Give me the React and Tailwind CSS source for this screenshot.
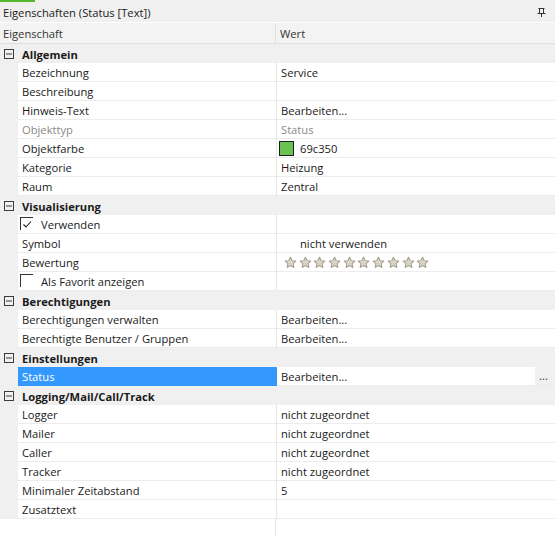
import React from "react";

const Minus = () => (
  <svg width="10" height="10" viewBox="0 0 10 10" className="block">
    <rect x="0.5" y="0.5" width="9" height="9" fill="none" stroke="#3c3c3c" strokeWidth="1" />
    <line x1="2" y1="5" x2="8" y2="5" stroke="#3c3c3c" strokeWidth="1" />
  </svg>
);

const Star = () => (
  <svg width="13" height="13" viewBox="0 0 24 24" className="block">
    <path
      d="M12 2.5l2.9 6.3 6.8.7-5.1 4.6 1.5 6.8L12 17.4l-6.1 3.5 1.5-6.8-5.1-4.6 6.8-.7z"
      fill="#f1eee6"
      stroke="#a39c8a"
      strokeWidth="2.2"
      strokeLinejoin="round"
    />
    <path d="M12 7l1.6 3.6 3.9.4-2.9 2.6.9 3.9L12 15.5l-3.5 2 .9-3.9-2.9-2.6 3.9-.4z" fill="#d8d2c2" />
  </svg>
);

const Check = ({ checked }) => (
  <div className="w-[13px] h-[13px] border-l border-t border-[#333] relative">
    {checked && (
      <svg width="13" height="13" viewBox="0 0 13 13" className="absolute left-0 top-0">
        <path d="M2.5 6.5 L5 9 L10 3.5" fill="none" stroke="#222" strokeWidth="1.1" />
      </svg>
    )}
  </div>
);

const rows = [
  { cat: "Allgemein" },
  { n: "Bezeichnung", v: "Service" },
  { n: "Beschreibung", v: "" },
  { n: "Hinweis-Text", v: "Bearbeiten..." },
  { n: "Objekttyp", v: "Status", gray: true },
  { n: "Objektfarbe", color: true },
  { n: "Kategorie", v: "Heizung" },
  { n: "Raum", v: "Zentral" },
  { cat: "Visualisierung" },
  { n: "Verwenden", check: true, checked: true },
  { n: "Symbol", v: "nicht verwenden", indent: true },
  { n: "Bewertung", stars: true },
  { n: "Als Favorit anzeigen", check: true, checked: false },
  { cat: "Berechtigungen" },
  { n: "Berechtigungen verwalten", v: "Bearbeiten..." },
  { n: "Berechtigte Benutzer / Gruppen", v: "Bearbeiten..." },
  { cat: "Einstellungen" },
  { n: "Status", v: "Bearbeiten...", selected: true },
  { cat: "Logging/Mail/Call/Track" },
  { n: "Logger", v: "nicht zugeordnet" },
  { n: "Mailer", v: "nicht zugeordnet" },
  { n: "Caller", v: "nicht zugeordnet" },
  { n: "Tracker", v: "nicht zugeordnet" },
  { n: "Minimaler Zeitabstand", v: "5" },
  { n: "Zusatztext", v: "" },
];

function Row({ r }) {
  if (r.cat) {
    return (
      <div className="flex h-[19px] bg-[#f0f0f0] items-center">
        <div className="w-[22px] flex items-center pl-[4px]">
          <Minus />
        </div>
        <span className="font-bold text-[#1a1a1a] pt-[2px]">{r.cat}</span>
      </div>
    );
  }
  return (
    <div className="flex h-[19px]">
      <div className="w-[18px] bg-[#f0f0f0] shrink-0" />
      <div
        className={
          "w-[258px] shrink-0 border-b flex items-center " +
          (r.selected ? "bg-[#3399ff] text-white border-[#3399ff]" : "bg-white border-[#ececec]")
        }
      >
        {r.check ? (
          <div className="flex items-center pl-[2px]">
            <Check checked={r.checked} />
            <span className="ml-[8px] pt-[2px]">{r.n}</span>
          </div>
        ) : (
          <span className={"pl-[4px] pt-[2px] " + (r.gray ? "text-[#8a8a8a]" : "")}>{r.n}</span>
        )}
      </div>
      <div className={"w-px shrink-0 " + (r.selected ? "bg-[#3399ff]" : "bg-[#e6e6e6]")} />
      <div className="flex-1 flex border-b border-[#ececec] bg-white items-center relative">
        {r.color ? (
          <div className="flex items-center pl-[2px]">
            <div className="w-[15px] h-[15px] bg-[#69c350] border border-[#1e1e1e]" />
            <span className="ml-[6px] pt-[2px]">69c350</span>
          </div>
        ) : r.stars ? (
          <div className="flex items-center gap-[1.7px] pl-[7px] pt-[1px]">
            {Array.from({ length: 10 }).map((_, i) => (
              <Star key={i} />
            ))}
          </div>
        ) : (
          <span className={"pt-[2px] " + (r.indent ? "pl-[23px] " : "pl-[4px] ") + (r.gray ? "text-[#8a8a8a]" : "")}>
            {r.v}
          </span>
        )}
        {r.selected && (
          <div className="absolute right-0 top-0 bottom-0 w-[20px] bg-[#f0f0f0] flex items-center pl-[4px] text-[#333]">
            ...
          </div>
        )}
      </div>
    </div>
  );
}

export default function App() {
  return (
    <div
      className="w-[555px] h-[536px] bg-white overflow-hidden flex flex-col text-[11.2px] text-[#1a1a1a] leading-none"
      style={{ fontFamily: '"Open Sans", "Noto Sans", sans-serif' }}
    >
      <div className="h-[22px] bg-[#f0f0f0] relative flex items-center shrink-0">
        <div className="absolute left-0 top-0 w-[35px] h-[2px] bg-[#56b52c]" />
        <span className="pl-[3px] pt-[4px] text-[#222]">Eigenschaften (Status [Text])</span>
        <svg width="9" height="9" viewBox="0 0 9 9" className="absolute left-[537px] top-[8px]">
          <path d="M1.5 0.5h6M2.5 0.5v4.5M6.5 0.5v4.5M0.5 5.5h8M4.5 5.5v3.5" stroke="#333" strokeWidth="1" fill="none" />
        </svg>
      </div>
      <div className="h-[22px] flex shrink-0 bg-[#f3f3f3] border-t border-white border-b border-b-[#dedede]">
        <div className="w-[276px] flex items-center pl-[3px] pt-[2px] border-r border-[#dedede] text-[#333]">Eigenschaft</div>
        <div className="flex-1 flex items-center pl-[4px] pt-[2px] text-[#333]">Wert</div>
      </div>
      <div className="flex flex-col shrink-0">
        {rows.map((r, i) => (
          <Row key={i} r={r} />
        ))}
      </div>
      <div className="flex-1 flex">
        <div className="w-[276px] border-r border-[#e6e6e6]" />
        <div className="flex-1" />
      </div>
    </div>
  );
}
